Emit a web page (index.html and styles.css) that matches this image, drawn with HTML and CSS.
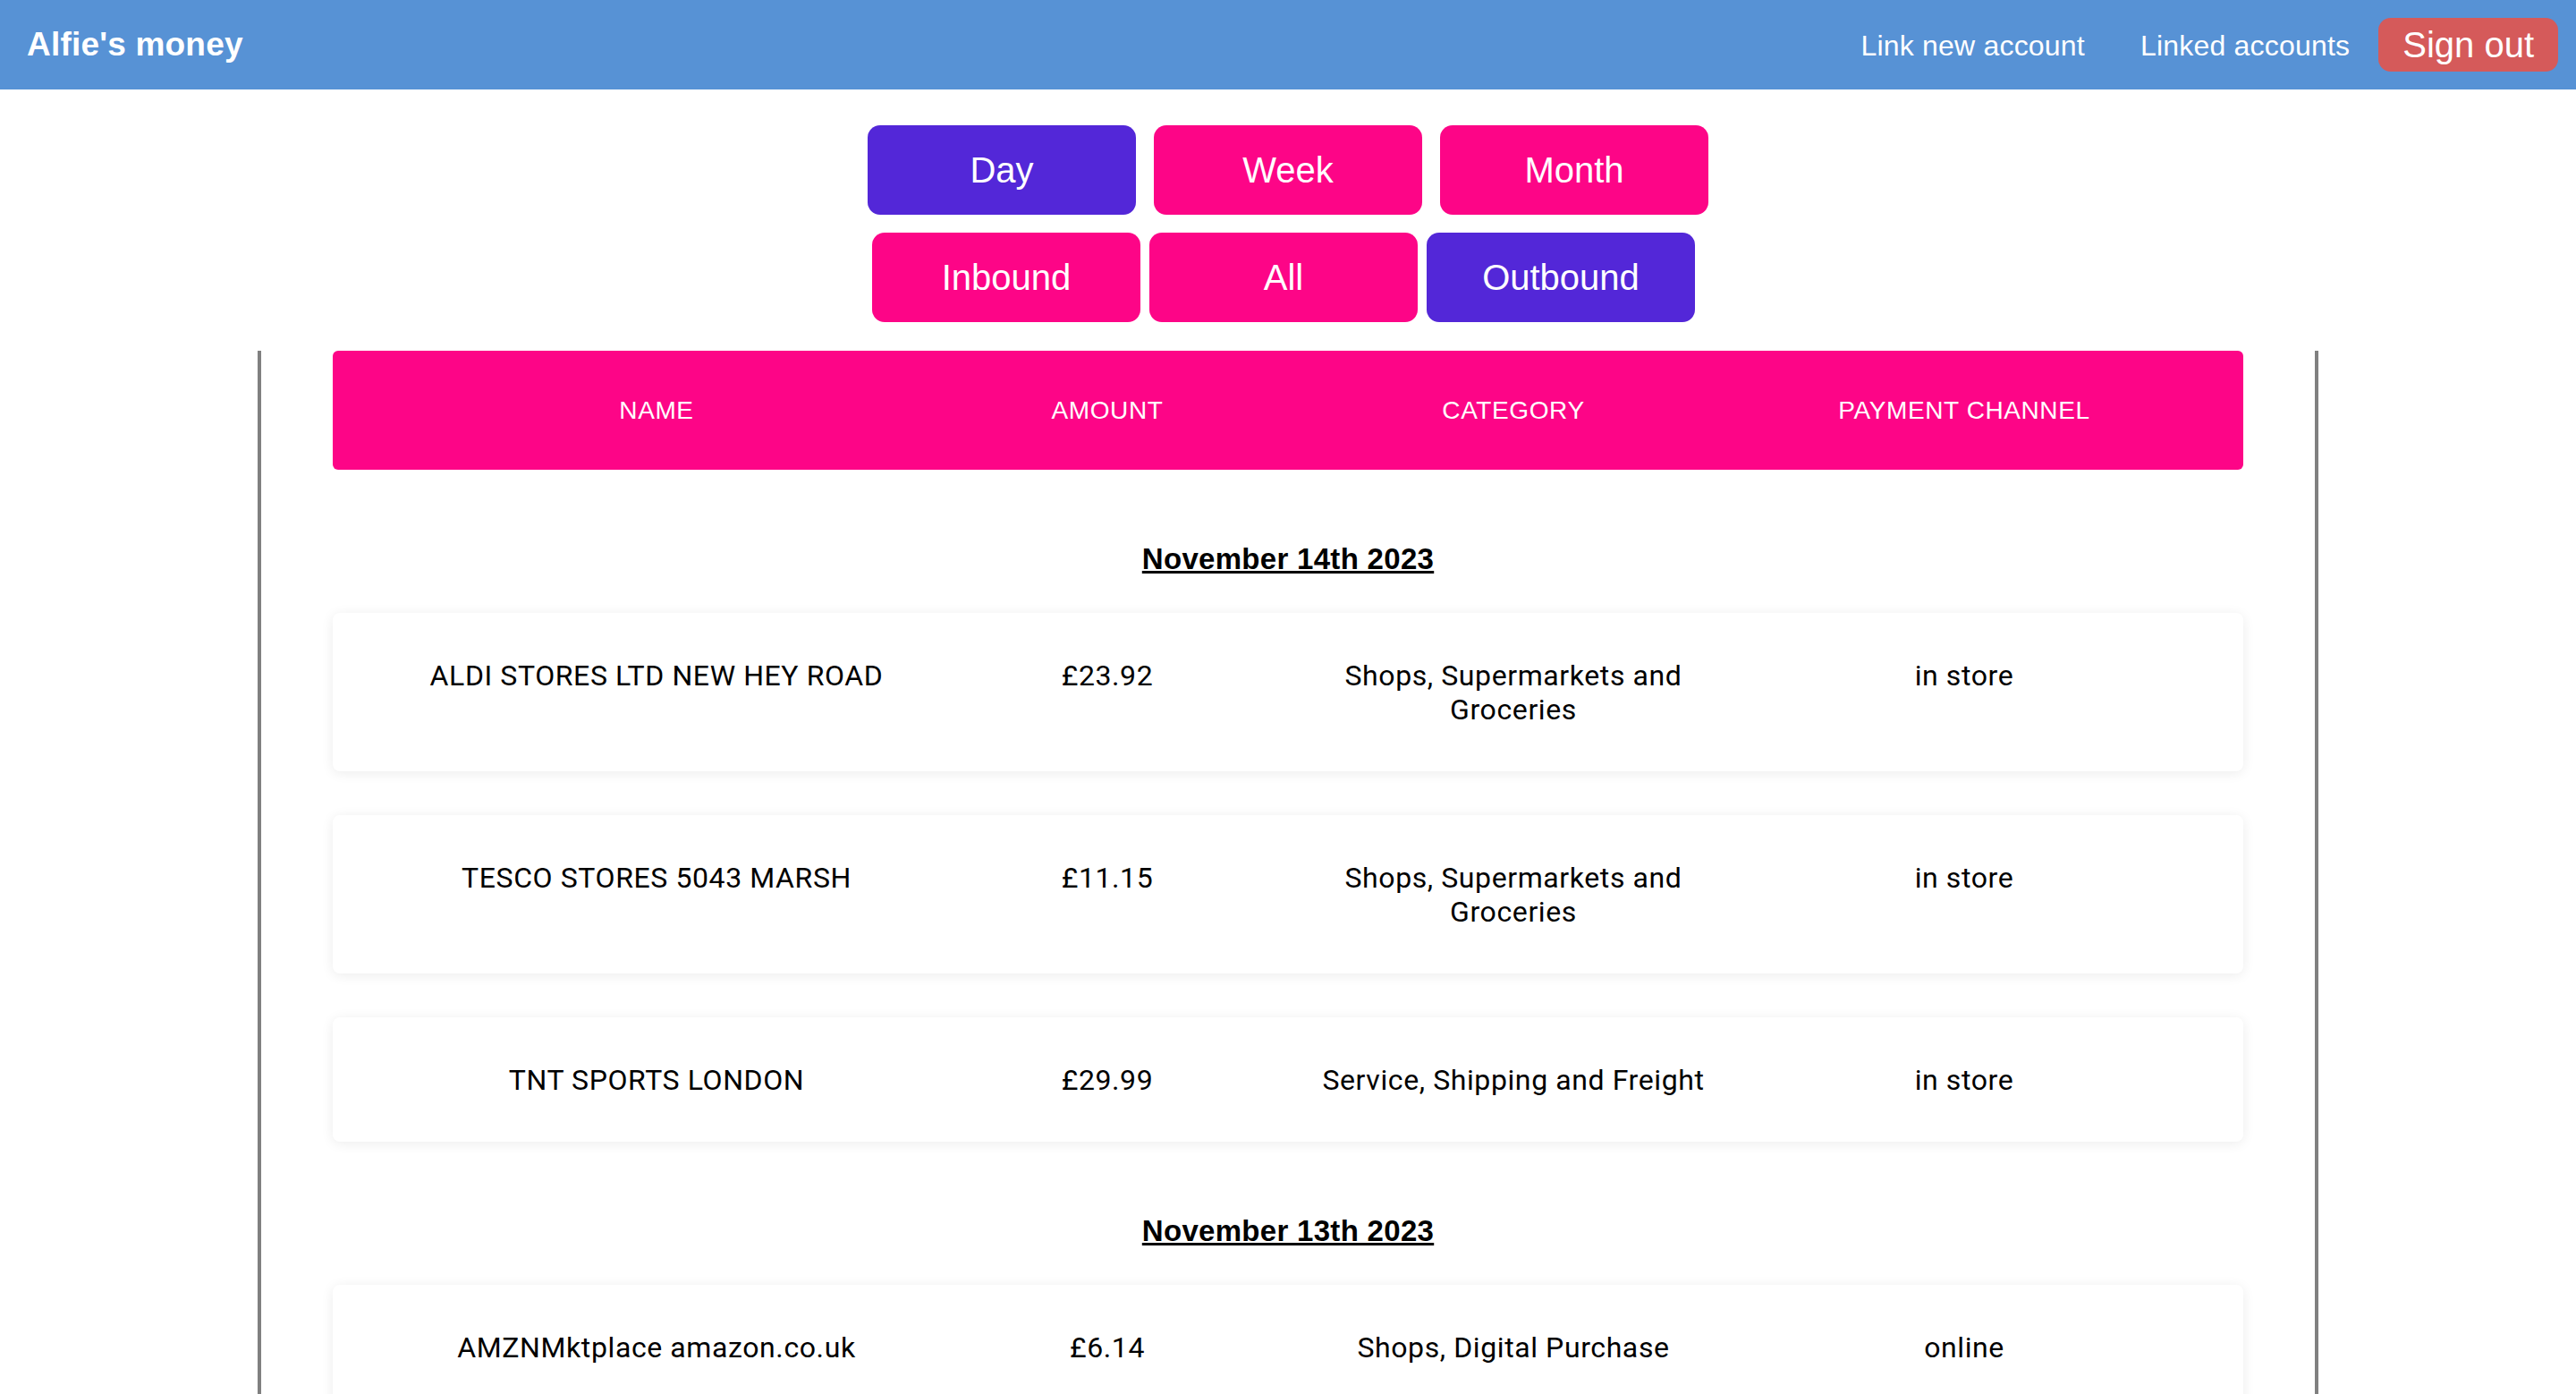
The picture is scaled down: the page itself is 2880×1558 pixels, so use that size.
FILE: index.html
```html
<!DOCTYPE html>
<html lang="en">
<head>
<meta charset="utf-8">
<title>Alfie's money</title>
<link rel="stylesheet" href="styles.css">
</head>
<body>
<nav class="navbar">
  <a class="brand" href="#">Alfie's money</a>
  <div class="nav-links">
    <a class="nav-link link-new" href="#">Link new account</a>
    <a class="nav-link link-linked" href="#">Linked accounts</a>
    <button class="signout" type="button">Sign out</button>
  </div>
</nav>

<div class="filters">
  <div class="filter-row period">
    <button class="btn btn-active" type="button">Day</button>
    <button class="btn" type="button">Week</button>
    <button class="btn" type="button">Month</button>
  </div>
  <div class="filter-row direction">
    <button class="btn" type="button">Inbound</button>
    <button class="btn" type="button">All</button>
    <button class="btn btn-active" type="button">Outbound</button>
  </div>
</div>

<main class="ledger">
  <div class="cols table-head">
    <div class="cell">NAME</div>
    <div class="cell">AMOUNT</div>
    <div class="cell">CATEGORY</div>
    <div class="cell">PAYMENT CHANNEL</div>
  </div>

  <section class="day-group">
    <h2 class="date"><u>November 14th 2023</u></h2>
    <div class="txn-list">
      <div class="cols txn">
        <div class="cell">ALDI STORES LTD NEW HEY ROAD</div>
        <div class="cell">£23.92</div>
        <div class="cell">Shops, Supermarkets and Groceries</div>
        <div class="cell">in store</div>
      </div>
      <div class="cols txn">
        <div class="cell">TESCO STORES 5043 MARSH</div>
        <div class="cell">£11.15</div>
        <div class="cell">Shops, Supermarkets and Groceries</div>
        <div class="cell">in store</div>
      </div>
      <div class="cols txn">
        <div class="cell">TNT SPORTS LONDON</div>
        <div class="cell">£29.99</div>
        <div class="cell">Service, Shipping and Freight</div>
        <div class="cell">in store</div>
      </div>
    </div>
  </section>

  <section class="day-group">
    <h2 class="date"><u>November 13th 2023</u></h2>
    <div class="txn-list">
      <div class="cols txn">
        <div class="cell">AMZNMktplace amazon.co.uk</div>
        <div class="cell">£6.14</div>
        <div class="cell">Shops, Digital Purchase</div>
        <div class="cell">online</div>
      </div>
    </div>
  </section>
</main>
</body>
</html>
```

FILE: styles.css
```css
html, body {
  margin: 0;
  padding: 0;
  background: #ffffff;
}

body {
  font-family: Roboto, "Liberation Sans", Arial, sans-serif;
  color: #000000;
}

/* ---------- navbar ---------- */
.navbar {
  height: 100px;
  background: #5792d5;
  display: flex;
  align-items: center;
  justify-content: space-between;
  padding: 0 20px 0 30px;
  box-sizing: border-box;
}

.brand {
  font-family: "Liberation Sans", Arial, sans-serif;
  font-weight: 700;
  font-size: 37px;
  letter-spacing: 0.2px;
  color: #ffffff;
  text-decoration: none;
}

.nav-links {
  display: flex;
  align-items: center;
}

.nav-link {
  font-family: "Liberation Sans", Arial, sans-serif;
  font-size: 32px;
  letter-spacing: 0.2px;
  color: #ffffff;
  text-decoration: none;
  padding-top: 2px;
}

.link-new {
  margin-right: 62px;
}

.link-linked {
  margin-right: 32px;
}

.signout {
  font-family: "Liberation Sans", Arial, sans-serif;
  font-size: 40px;
  color: #ffffff;
  background: #d55a5a;
  border: none;
  border-radius: 14px;
  height: 60px;
  padding: 0 27px;
  line-height: 60px;
}

/* ---------- filters ---------- */
.filters {
  display: flex;
  flex-direction: column;
  gap: 20px;
  padding-top: 40px;
}

.filter-row {
  display: flex;
  justify-content: center;
}

.period {
  gap: 20px;
}

.direction {
  gap: 10px;
  padding-right: 10px;
}

.btn {
  width: 300px;
  height: 100px;
  border: none;
  border-radius: 14px;
  background: #fd0587;
  color: #ffffff;
  font-family: "Liberation Sans", Arial, sans-serif;
  font-size: 40px;
  padding: 0;
}

.btn-active {
  background: #5327d8;
}

/* ---------- ledger ---------- */
.ledger {
  width: 2304px;
  box-sizing: border-box;
  margin: 32px auto 0;
  padding: 0 80px 60px;
  border-left: 4px solid #808080;
  border-right: 4px solid #808080;
}

.cols {
  display: grid;
  grid-template-columns: 604px 404px 504px 504px;
  padding: 0 60px;
  box-sizing: border-box;
}

.cell {
  padding: 0 16px;
  text-align: center;
}

.table-head {
  background: #fd0587;
  border-radius: 6px;
  padding-top: 50px;
  padding-bottom: 50px;
  color: #ffffff;
  font-family: "Liberation Sans", Arial, sans-serif;
  font-size: 28px;
  line-height: 33px;
  letter-spacing: 0.6px;
}

.date {
  margin: 81px 0 41px;
  text-align: center;
  font-family: "Liberation Sans", Arial, sans-serif;
  font-weight: 700;
  font-size: 33px;
  letter-spacing: 0.3px;
  line-height: 38px;
}

.txn-list {
  display: flex;
  flex-direction: column;
  gap: 49px;
}

.txn {
  background: #ffffff;
  border-radius: 8px;
  box-shadow: 0 2px 14px rgba(0, 0, 0, 0.08);
  padding-top: 50px;
  padding-bottom: 50px;
  font-size: 32px;
  line-height: 38px;
  letter-spacing: 0.6px;
  align-items: start;
}

.txn .cell {
  padding-top: 1px;
}
```
